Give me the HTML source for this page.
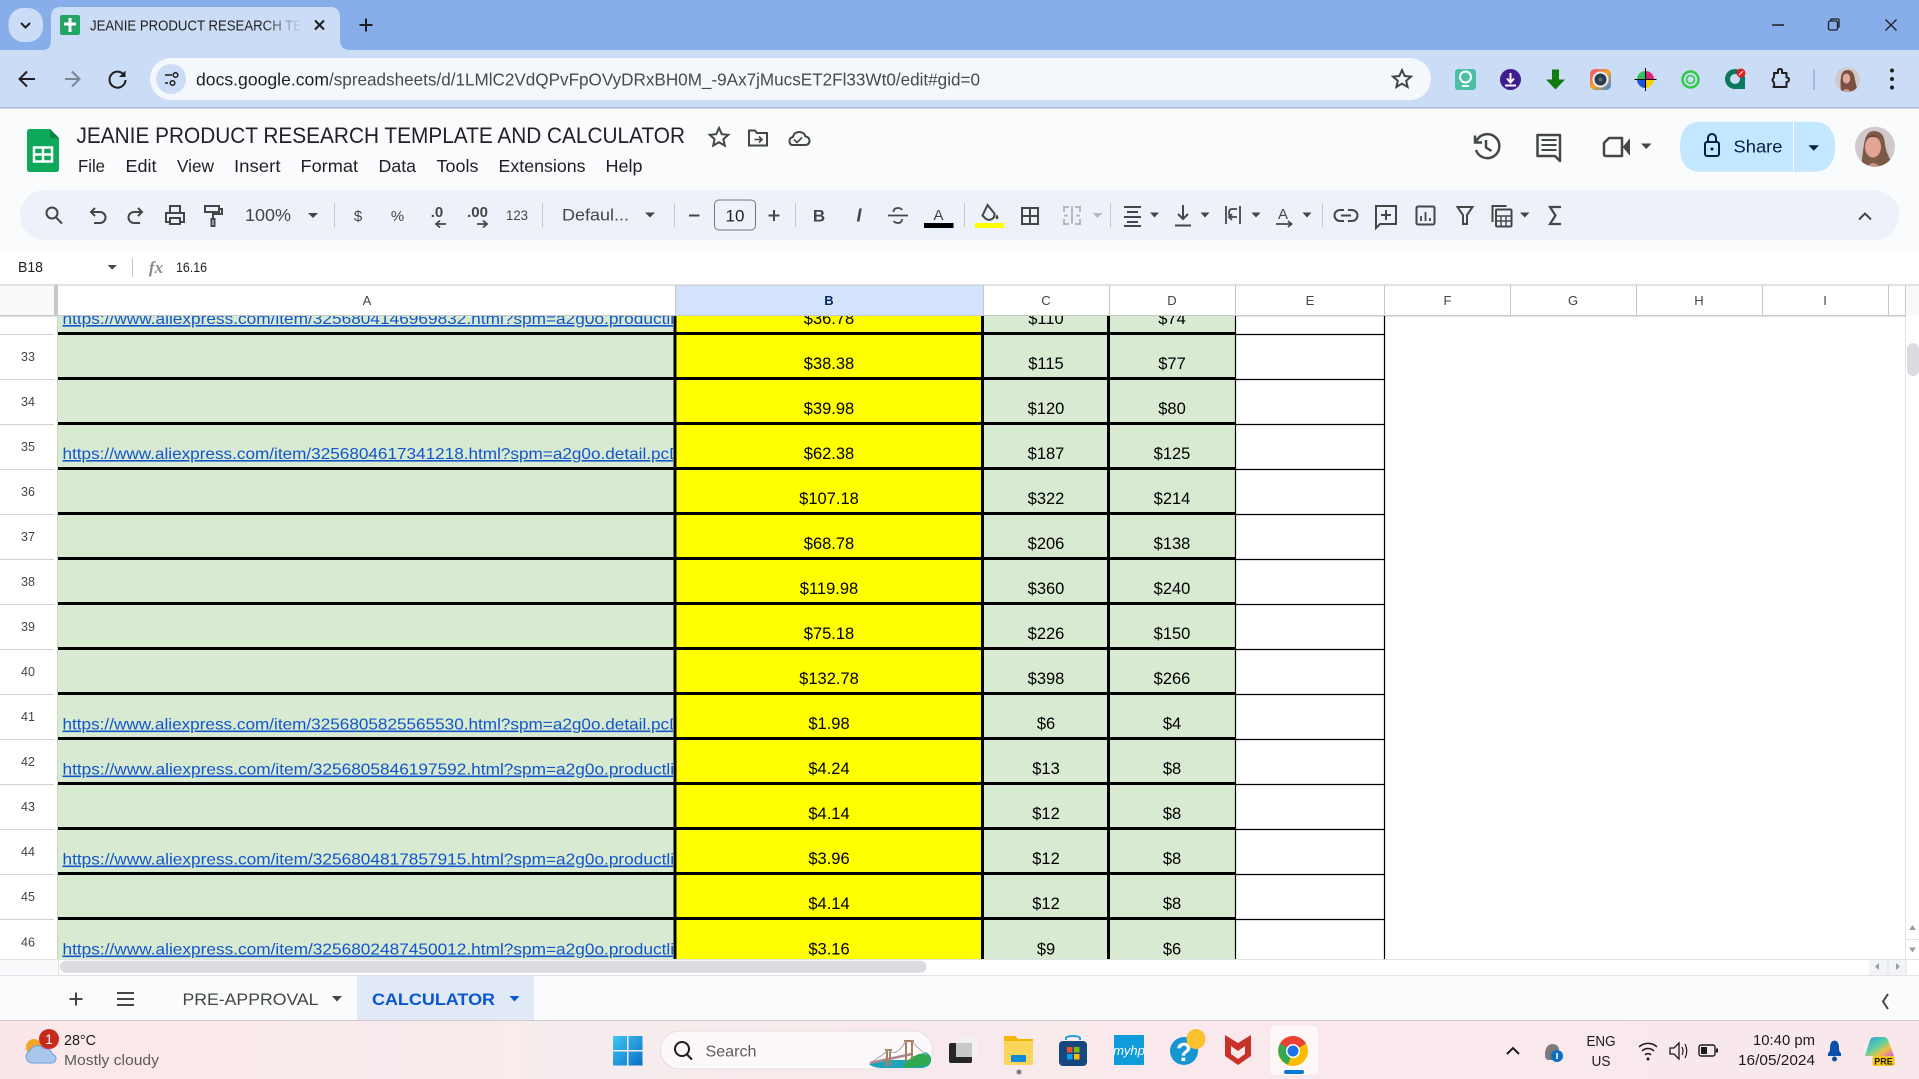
<!DOCTYPE html>
<html lang="en"><head><meta charset="utf-8"><title>JEANIE PRODUCT RESEARCH TEMPLATE AND CALCULATOR</title>
<style>
html,body{margin:0;padding:0;width:1919px;height:1079px;overflow:hidden;background:#fff}
svg{display:block;font-family:"Liberation Sans",sans-serif}
.v{font-size:16.5px;fill:#000;text-anchor:middle}
.r{font-size:12.5px;fill:#444;text-anchor:middle}
.c{font-size:13px;fill:#444;text-anchor:middle}
.l{font-size:16px;fill:#1155cc;text-decoration:underline}
.m{font-size:17.5px;fill:#202124}
.ic{fill:none;stroke:#444746;stroke-width:2}
.t{font-size:15px;fill:#444746;text-anchor:middle}
.cr{fill:#444746}
</style></head><body>
<svg width="1919" height="1079" viewBox="0 0 1919 1079" xmlns="http://www.w3.org/2000/svg">
<defs>
<clipPath id="g"><rect x="0" y="316" width="1906" height="643"/></clipPath>
<clipPath id="ac"><rect x="58" y="316" width="615" height="643"/></clipPath>
<clipPath id="a1"><circle cx="1847.500" cy="79.500" r="12.500"/></clipPath>
<clipPath id="a2"><circle cx="1875" cy="146.700" r="20"/></clipPath>
<linearGradient id="fade" x1="0" x2="1"><stop offset="0" stop-color="#cbdcf6" stop-opacity="0"/><stop offset="1" stop-color="#cbdcf6"/></linearGradient>
<linearGradient id="tb" x1="0" x2="1"><stop offset="0" stop-color="#fbe7e9"/><stop offset=".3" stop-color="#f7eced"/><stop offset=".6" stop-color="#f9e9ec"/><stop offset="1" stop-color="#f9e8eb"/></linearGradient>
<linearGradient id="wn" x1="0" y1="0" x2="1" y2="1"><stop offset="0" stop-color="#3ec6f5"/><stop offset="1" stop-color="#0a6fc4"/></linearGradient>
<linearGradient id="cam" x1="0" y1="0" x2="1" y2="1"><stop offset="0" stop-color="#f5487f"/><stop offset=".5" stop-color="#f5a623"/><stop offset="1" stop-color="#2f80ed"/></linearGradient>
<linearGradient id="cop" x1="0" y1="0" x2="1" y2="1"><stop offset="0" stop-color="#1f9fe8"/><stop offset=".45" stop-color="#5fd0a0"/><stop offset=".7" stop-color="#f0c040"/><stop offset="1" stop-color="#d25bd8"/></linearGradient>
</defs>

<!-- browser chrome -->
<rect width="1919" height="50" fill="#87aeeb"/>
<rect y="50" width="1919" height="58" fill="#cbdcf6"/>
<rect y="107" width="1919" height="1.500" fill="#a5b6d2"/>
<rect x="8.500" y="8" width="34.500" height="34" rx="15" fill="#cbdcf6"/>
<path d="M21 23l4.500 4.500 4.500-4.500" fill="none" stroke="#1f1f1f" stroke-width="2"/>
<path d="M43 50q8 0 8-10V17q0-10 10-10h269q10 0 10 10v23q0 10 10 10z" fill="#cbdcf6"/>
<rect x="60" y="15" width="20" height="20" rx="2" fill="#23a566"/>
<path d="M70 18v14M64 24h12" stroke="#fff" stroke-width="3"/>
<text x="90" y="30.500" font-size="15" fill="#1f1f1f" textLength="212" lengthAdjust="spacingAndGlyphs">JEANIE PRODUCT RESEARCH TE</text>
<rect x="262" y="12" width="40" height="26" fill="url(#fade)"/>
<path d="M315 20.500l9 9M324 20.500l-9 9" stroke="#1f1f1f" stroke-width="2"/>
<path d="M366 18.500v13M359.500 25h13" stroke="#1f1f1f" stroke-width="2"/>
<path d="M1772 25h12" stroke="#1f1f1f" stroke-width="1.500"/>
<rect x="1828.500" y="21" width="9" height="9" rx="1.500" fill="none" stroke="#1f1f1f" stroke-width="1.300"/><path d="M1831 21v-2h7q1 0 1 1v7h-1.500" fill="none" stroke="#1f1f1f" stroke-width="1.300"/>
<path d="M1885.500 19.500l11 11M1896.500 19.500l-11 11" stroke="#1f1f1f" stroke-width="1.300"/>

<path d="M35 79H20M27 71.500L19.500 79l7.500 7.500" fill="none" stroke="#1f1f1f" stroke-width="2"/>
<path d="M65 79h14M72 71.500l7.500 7.500-7.500 7.500" fill="none" stroke="#7a8595" stroke-width="2"/>
<path d="M124 75a8 8 0 1 0 1.500 5" fill="none" stroke="#1f1f1f" stroke-width="2"/><path d="M125.500 70.500v6.500h-6.500z" fill="#1f1f1f"/>
<rect x="150" y="58" width="1281" height="42" rx="21" fill="#f4f8fd"/>
<circle cx="171" cy="79" r="15" fill="#cbdcf6"/>
<path d="M165 75h7M165 83h3" stroke="#1f1f1f" stroke-width="1.600"/><circle cx="175.500" cy="75" r="2.300" fill="none" stroke="#1f1f1f" stroke-width="1.500"/><circle cx="172.500" cy="83" r="2.300" fill="none" stroke="#1f1f1f" stroke-width="1.500"/>
<text x="196" y="85.500" font-size="17.500" fill="#1f1f1f" textLength="133" lengthAdjust="spacingAndGlyphs">docs.google.com</text>
<text x="329" y="85.500" font-size="17.500" fill="#474b50" textLength="651" lengthAdjust="spacingAndGlyphs">/spreadsheets/d/1LMlC2VdQPvFpOVyDRxBH0M_-9Ax7jMucsET2Fl33Wt0/edit#gid=0</text>
<path d="M1402 70l2.700 6 6.300.6-4.800 4.200 1.400 6.200-5.600-3.300-5.600 3.300 1.400-6.200-4.800-4.200 6.300-.6z" fill="none" stroke="#444" stroke-width="2"/>

<!-- extensions -->
<rect x="1455" y="69" width="21" height="21" rx="3" fill="#4dbfa4"/><circle cx="1465.500" cy="77" r="5.500" fill="none" stroke="#fff" stroke-width="2"/><path d="M1462 86h7" stroke="#fff" stroke-width="2"/>
<circle cx="1510.500" cy="79.500" r="10.500" fill="#3f1d91"/><path d="M1510.500 73v8M1507 78.500l3.500 4 3.500-4M1505 85.500h11" stroke="#fff" stroke-width="2" fill="none"/>
<path d="M1552 69.500h7v10h6l-9.500 10-9.500-10h6z" fill="#107c10"/>
<rect x="1590" y="69" width="21" height="21" rx="5" fill="url(#cam)"/><circle cx="1600.500" cy="79.500" r="8" fill="#e8eef5"/><circle cx="1600.500" cy="79.500" r="6" fill="#2d3a4a"/><circle cx="1600.500" cy="79.500" r="2" fill="#5a6b7e"/>
<circle cx="1645.500" cy="79.500" r="8.500" fill="#f5d000"/><path d="M1645.500 79.500V71a8.500 8.500 0 0 1 8.500 8.500z" fill="#e0217b"/><path d="M1645.500 79.500H1637a8.500 8.500 0 0 1 8.500-8.500z" fill="#30c060"/><path d="M1645.500 79.500V88a8.500 8.500 0 0 1-8.500-8.500z" fill="#2050e0"/><path d="M1645.500 68v23M1634.500 79.500h22" stroke="#000" stroke-width="1"/>
<circle cx="1690.500" cy="79.500" r="8" fill="none" stroke="#2ecc40" stroke-width="2.500"/><circle cx="1690.500" cy="79.500" r="4" fill="none" stroke="#2ecc40" stroke-width="1.600"/>
<path d="M1735 69a10 10 0 1 0 0 20h10v-8a10 10 0 0 0-10-12z" fill="#0a7a5e"/><circle cx="1735" cy="79" r="5" fill="#cbdcf6"/><circle cx="1741" cy="73" r="4.500" fill="#e02020"/><path d="M1739 75l4-4" stroke="#fff" stroke-width="1"/>
<path d="M1774 73h4v-2.500q0-1.500 2-1.500t2 1.500V73h4.500v4.500q2.500 0 2.500 2.200t-2.500 2.300V87h-13q1.500-3 0-5-2-2 0-4 1-2 .5-5z" fill="none" stroke="#1f1f1f" stroke-width="2" stroke-linejoin="round"/>
<path d="M1814 69v21" stroke="#8fb0e0" stroke-width="1.500"/>
<g clip-path="url(#a1)"><rect x="1835" y="67" width="25" height="25" fill="#cfc9cc"/><path d="M1841 92q-1-10 0-15 1-7 6.500-7t7 7q1 6 3.500 15z" fill="#7a5040"/><ellipse cx="1846.500" cy="78.500" rx="3.800" ry="5" fill="#e2a89a"/><path d="M1842 92q4-6 9 0z" fill="#d49f90"/></g>
<circle cx="1892" cy="70.500" r="2" fill="#1f1f1f"/><circle cx="1892" cy="79" r="2" fill="#1f1f1f"/><circle cx="1892" cy="87.500" r="2" fill="#1f1f1f"/>

<!-- sheets header -->
<rect y="108.500" width="1919" height="141.500" fill="#f9fbfd"/>
<path d="M30 129h20l9 9v31q0 3-3 3H30q-3 0-3-3v-37q0-3 3-3z" fill="#0da85a"/>
<path d="M50 129l9 9h-9z" fill="#0c8046"/>
<path d="M34 147.500h18v14H34zM34 154.500h18M43 147.500v14" fill="none" stroke="#fff" stroke-width="2.500"/>
<text x="76.500" y="143" font-size="22" fill="#202124" textLength="608.500" lengthAdjust="spacingAndGlyphs">JEANIE PRODUCT RESEARCH TEMPLATE AND CALCULATOR</text>
<path d="M719 128l2.800 6.200 6.500.6-4.900 4.400 1.400 6.400-5.800-3.400-5.800 3.400 1.400-6.400-4.900-4.400 6.500-.6z" fill="none" stroke="#444746" stroke-width="2"/>
<path d="M749 130.500h6l2 2.500h10v12.500h-18z" fill="none" stroke="#444746" stroke-width="2"/><path d="M754.500 139.500h7M759 136.500l3 3-3 3" fill="none" stroke="#444746" stroke-width="1.600"/>
<path d="M793 145h12q4.500 0 4.500-4.200 0-3.800-4-4.300-1.500-4.500-6-4.500-5.500 0-6.500 5-3.500.6-3.500 4 0 4 3.500 4z" fill="none" stroke="#444746" stroke-width="2"/><path d="M794 139.500l3 3 5-5" fill="none" stroke="#444746" stroke-width="1.600"/>
<g class="m">
<text x="78" y="172" textLength="27" lengthAdjust="spacingAndGlyphs">File</text>
<text x="125.500" y="172" textLength="31" lengthAdjust="spacingAndGlyphs">Edit</text>
<text x="177" y="172" textLength="37" lengthAdjust="spacingAndGlyphs">View</text>
<text x="234" y="172" textLength="46.500" lengthAdjust="spacingAndGlyphs">Insert</text>
<text x="300.500" y="172" textLength="57.500" lengthAdjust="spacingAndGlyphs">Format</text>
<text x="378.500" y="172" textLength="37.500" lengthAdjust="spacingAndGlyphs">Data</text>
<text x="436.500" y="172" textLength="42" lengthAdjust="spacingAndGlyphs">Tools</text>
<text x="498.500" y="172" textLength="87" lengthAdjust="spacingAndGlyphs">Extensions</text>
<text x="605.500" y="172" textLength="37" lengthAdjust="spacingAndGlyphs">Help</text>
</g>

<!-- right header -->
<path d="M1475 135.500v7h7" fill="none" stroke="#444746" stroke-width="2.500"/><path d="M1476.500 141a12 12 0 1 1-.5 9" fill="none" stroke="#444746" stroke-width="2.500"/><path d="M1486 140v7.500l5.500 3.500" fill="none" stroke="#444746" stroke-width="2.500"/>
<path d="M1537.500 135h22.500v26l-5-5h-17.500z" fill="none" stroke="#444746" stroke-width="2.500" stroke-linejoin="round"/><path d="M1541.500 140h15M1541.500 145h15M1541.500 150h15" stroke="#444746" stroke-width="2"/>
<path d="M1609 138h13v18h-16q-2 0-2-2v-11z" fill="none" stroke="#444746" stroke-width="2.500" stroke-linejoin="round"/><path d="M1624 147l5-6v12z" fill="#444746" stroke="#444746" stroke-width="2"/>
<path d="M1641 143.500h10.500l-5.250 5.500z" fill="#444746"/>
<path d="M1701 121.700h112q22 0 22 25t-22 25H1701q-21 0-21-25t21-25z" fill="#c2e7ff"/>
<path d="M1793.500 121.700v50" stroke="#f9fbfd" stroke-width="1"/>
<rect x="1705" y="142" width="14" height="14" rx="2" fill="none" stroke="#041e49" stroke-width="2"/><path d="M1708 142v-4a4 4 0 0 1 8 0v4" fill="none" stroke="#041e49" stroke-width="2"/><circle cx="1712" cy="149" r="1.500" fill="#041e49"/>
<text x="1733.500" y="152.500" font-size="17.500" fill="#041e49" textLength="49" lengthAdjust="spacingAndGlyphs">Share</text>
<path d="M1808.500 145.200h10.500l-5.250 5.500z" fill="#041e49"/>
<g clip-path="url(#a2)"><rect x="1855" y="126" width="40" height="42" fill="#cfc9cc"/><path d="M1861 168q2-18 3-24 2-13 10-13 10 0 11 13 1 10 10 24z" fill="#7d5a48"/><ellipse cx="1873" cy="147" rx="8" ry="10.500" fill="#e2a594"/><path d="M1866 138q7 -6 14 0-7-2-14 0z" fill="#6a4636"/><path d="M1866 168q7-10 15 0z" fill="#c78f80"/></g>

<!-- toolbar -->
<rect x="20" y="190" width="1879" height="50" rx="25" fill="#edf2fa"/>
<g class="ic">
<circle cx="52" cy="213" r="5.500"/><path d="M56 217.500l6 6"/>
<path d="M92 212h8a5 5 0 0 1 0 11h-6M95 208l-4 4 4 4" transform="translate(0,0)"/>
<path d="M142 212h-8a5 5 0 0 0 0 11h6M138 208l4 4-4 4"/>
<path d="M170 213v-7h10v7M170 222h-4v-9h18v9h-4M170 218h10v6h-10z"/>
<path d="M205 206h14v6h-14zM219 209h3v5h-9v5M211.500 219h3v7h-3z"/>
</g>
<text x="245" y="221" font-size="17.500" fill="#444746" textLength="46" lengthAdjust="spacingAndGlyphs">100%</text>
<path class="cr" d="M308 213h10l-5 5z"/>
<path d="M334.500 203v24M542.500 203v24M674.500 203v24M795.500 203v24M964.500 203v24M1110.500 203v24M1322.500 203v24" stroke="#c7c7c7" stroke-width="1"/>
<text x="358" y="221" class="t">$</text><text x="397.500" y="221" class="t">%</text>
<text x="437" y="217" font-size="15" font-weight="bold" fill="#444746" text-anchor="middle">.0</text>
<path d="M446 224h-10M440 220.500l-4 3.500 4 3.500" fill="none" stroke="#444746" stroke-width="1.800"/>
<text x="477.500" y="217" font-size="15" font-weight="bold" fill="#444746" text-anchor="middle">.00</text>
<path d="M477 224h10M483 220.500l4 3.500-4 3.500" fill="none" stroke="#444746" stroke-width="1.800"/>
<text x="517" y="220" font-size="14" fill="#444746" text-anchor="middle" textLength="22" lengthAdjust="spacingAndGlyphs">123</text>
<text x="562" y="220.500" font-size="17" fill="#444746" textLength="67" lengthAdjust="spacingAndGlyphs">Defaul...</text>
<path class="cr" d="M645 212.500h10l-5 5z"/>
<path d="M689 215.500h10.500" stroke="#444746" stroke-width="2"/>
<rect x="714.500" y="200" width="41" height="30" rx="4.500" fill="none" stroke="#747775" stroke-width="1"/>
<text x="735" y="221.500" font-size="17" fill="#1f1f1f" text-anchor="middle">10</text>
<path d="M768.500 215.500h11M774 210v11" stroke="#444746" stroke-width="2"/>
<text x="819" y="221.500" font-size="17" font-weight="bold" fill="#444746" text-anchor="middle">B</text>
<text x="859" y="221.500" font-size="18" font-style="italic" font-weight="bold" fill="#444746" text-anchor="middle">I</text>
<path d="M888 215.500h20M893.500 212q0-4 4.500-4 3 0 4 2M902 219q0 4-4 4-3 0-4.500-2" fill="none" stroke="#444746" stroke-width="1.800"/>
<text x="938.500" y="220" font-size="15" fill="#444746" text-anchor="middle">A</text>
<rect x="924" y="223" width="29.500" height="5" fill="#000"/>
<path d="M987.500 205l7 8.500a5.500 5.500 0 0 1-9 5l-3-3z" fill="none" stroke="#444746" stroke-width="2"/><path d="M997 214.500q3 3.500 0 5-3-1.500 0-5z" fill="#444746"/>
<rect x="975" y="223" width="29" height="5" fill="#ffff00"/>
<path d="M1022 208h16v16h-16zM1030 208v16M1022 216h16" fill="none" stroke="#444746" stroke-width="2"/>
<path d="M1064 212v-5h5M1080 212v-5h-5M1064 219v5h5M1080 219v5h-5M1072 206v18M1068 215.500h-4M1080 215.500h-4" fill="none" stroke="#b7b9bb" stroke-width="2"/>
<path d="M1092.500 213h10l-5 5z" fill="#b7b9bb"/>
<path d="M1124 207h17M1127 212h11M1124 217h17M1127 222h11M1124 226h17" stroke="#444746" stroke-width="2"/>
<path class="cr" d="M1150 212.500h9l-4.500 5z"/>
<path d="M1183 205v14M1178 214l5 5 5-5M1175 225.500h16" fill="none" stroke="#444746" stroke-width="2"/>
<path class="cr" d="M1200.500 212.500h9l-4.500 5z"/>
<path d="M1226 206v18M1240 206v18M1237 209h-5q-3 0-3 4t3 4h5M1232 214l-3 3 3 3" fill="none" stroke="#444746" stroke-width="1.800"/>
<path class="cr" d="M1251.500 212.500h9l-4.500 5z"/>
<text x="1283" y="219" font-size="15" fill="#444746" text-anchor="middle">A</text>
<path d="M1276 224h15M1288 221l3.500 3-3.500 3" fill="none" stroke="#444746" stroke-width="1.800"/>
<path class="cr" d="M1302.500 212.500h9l-4.500 5z"/>
<path d="M1344 210h-4a5.500 5.500 0 0 0 0 11h4M1348 210h4a5.500 5.500 0 0 1 0 11h-4M1341 215.500h10" fill="none" stroke="#444746" stroke-width="2"/>
<path d="M1376 206h20v18h-16l-4 4z" fill="none" stroke="#444746" stroke-width="2"/><path d="M1386 210v10M1381 215h10" stroke="#444746" stroke-width="2"/>
<rect x="1416.500" y="206.500" width="18" height="18" rx="1.500" fill="none" stroke="#444746" stroke-width="2"/><path d="M1421 221v-5M1425.500 221v-9M1430 221v-3" stroke="#444746" stroke-width="1.800"/>
<path d="M1457.500 207h15l-5.500 8v9h-4v-9z" fill="none" stroke="#444746" stroke-width="2"/>
<path d="M1492.500 222v-16h14" fill="none" stroke="#444746" stroke-width="2"/><rect x="1496" y="209.500" width="15.500" height="17" rx="1" fill="none" stroke="#444746" stroke-width="2"/><path d="M1496 216h15M1496 221h15M1501 216v10M1506 216v10" stroke="#444746" stroke-width="1.400"/>
<path class="cr" d="M1520 212.500h9.500l-4.750 5z"/>
<path d="M1561 207h-11l5.500 8.500-5.500 8.500h11" fill="none" stroke="#444746" stroke-width="2.200"/>
<path d="M1859 219.500l6-6 6 6" fill="none" stroke="#444746" stroke-width="2"/>

<!-- formula bar -->
<rect y="250" width="1919" height="35" fill="#fff"/>
<text x="18" y="272" font-size="14.500" fill="#1f1f1f" textLength="25" lengthAdjust="spacingAndGlyphs">B18</text>
<path class="cr" d="M107.500 265h9.500l-4.750 4.500z"/>
<path d="M132.500 258v19" stroke="#c7c7c7"/>
<text x="156" y="273" font-size="17" font-style="italic" font-family="Liberation Serif" font-weight="bold" fill="#8a8c8e" text-anchor="middle">fx</text>
<text x="176" y="272" font-size="14" fill="#1f1f1f" textLength="31" lengthAdjust="spacingAndGlyphs">16.16</text>
<rect y="284.500" width="1919" height="1" fill="#c7c7c7"/>

<!-- column headers -->
<rect x="0" y="285.500" width="54" height="30" fill="#f8f9fa"/>
<rect x="54" y="285.500" width="4" height="30" fill="#c7c7c7"/>
<rect x="675" y="285.500" width="308" height="30" fill="#d3e3fd"/>
<rect x="1906" y="285.500" width="13" height="30" fill="#f8f9fa"/>
<path d="M675.500 285v30M983.500 285v30M1109.500 285v30M1235.500 285v30M1384.500 285v30M1510.500 285v30M1636.500 285v30M1762.500 285v30M1888.500 285v30M1905.500 285v30" stroke="#c7c7c7" fill="none"/>
<path d="M1905.500 316v643" stroke="#e1e3e6"/>
<text class="c" x="367" y="305">A</text>
<text class="c" x="829" y="305" style="fill:#0a2a5e;font-weight:bold">B</text>
<text class="c" x="1046" y="305">C</text><text class="c" x="1172" y="305">D</text><text class="c" x="1310" y="305">E</text><text class="c" x="1447.500" y="305">F</text><text class="c" x="1573" y="305">G</text><text class="c" x="1699" y="305">H</text><text class="c" x="1825" y="305">I</text>
<rect y="315" width="1906" height="1.500" fill="#c7c7c7"/>

<!-- grid -->
<g clip-path="url(#g)">
<rect x="58" y="316" width="617" height="643" fill="#d9ead3"/>
<rect x="675" y="316" width="308" height="643" fill="#ffff00"/>
<rect x="983" y="316" width="252" height="643" fill="#d9ead3"/>
<path d="M0 334.500h54M0 379.500h54M0 424.500h54M0 469.500h54M0 514.500h54M0 559.500h54M0 604.500h54M0 649.500h54M0 694.500h54M0 739.500h54M0 784.500h54M0 829.500h54M0 874.500h54M0 919.500h54" stroke="#d0d0d0"/>
<path d="M1235 334.500h150M1235 379.500h150M1235 424.500h150M1235 469.500h150M1235 514.500h150M1235 559.500h150M1235 604.500h150M1235 649.500h150M1235 694.500h150M1235 739.500h150M1235 784.500h150M1235 829.500h150M1235 874.500h150M1235 919.500h150" stroke="#000" stroke-width="1.200"/>
<path d="M58 333.500h1177M58 378.500h1177M58 423.500h1177M58 468.500h1177M58 513.500h1177M58 558.500h1177M58 603.500h1177M58 648.500h1177M58 693.500h1177M58 738.500h1177M58 783.500h1177M58 828.500h1177M58 873.500h1177M58 918.500h1177" stroke="#000" stroke-width="3"/>
<path d="M675 316v643M982.500 316v643M1108.500 316v643" stroke="#000" stroke-width="3"/>
<path d="M1235.500 316v643M1384.500 316v643" stroke="#000" stroke-width="1.200"/>

<g clip-path="url(#ac)">
<text class="l" x="62.500" y="324" textLength="625" lengthAdjust="spacingAndGlyphs">https://www.aliexpress.com/item/3256804146969832.html?spm=a2g0o.productlist</text>
<text class="l" x="62.500" y="459" textLength="619" lengthAdjust="spacingAndGlyphs">https://www.aliexpress.com/item/3256804617341218.html?spm=a2g0o.detail.pcD</text>
<text class="l" x="62.500" y="729.500" textLength="619" lengthAdjust="spacingAndGlyphs">https://www.aliexpress.com/item/3256805825565530.html?spm=a2g0o.detail.pcD</text>
<text class="l" x="62.500" y="774.500" textLength="625" lengthAdjust="spacingAndGlyphs">https://www.aliexpress.com/item/3256805846197592.html?spm=a2g0o.productlist</text>
<text class="l" x="62.500" y="864.500" textLength="625" lengthAdjust="spacingAndGlyphs">https://www.aliexpress.com/item/3256804817857915.html?spm=a2g0o.productlist</text>
<text class="l" x="62.500" y="954.500" textLength="625" lengthAdjust="spacingAndGlyphs">https://www.aliexpress.com/item/3256802487450012.html?spm=a2g0o.productlist</text>
</g>

<text class="v" x="829" y="324">$36.78</text><text class="v" x="1046" y="324">$110</text><text class="v" x="1172" y="324">$74</text>
<text class="r" x="28" y="361">33</text><text class="v" x="829" y="369">$38.38</text><text class="v" x="1046" y="369">$115</text><text class="v" x="1172" y="369">$77</text>
<text class="r" x="28" y="406">34</text><text class="v" x="829" y="414">$39.98</text><text class="v" x="1046" y="414">$120</text><text class="v" x="1172" y="414">$80</text>
<text class="r" x="28" y="451">35</text><text class="v" x="829" y="459">$62.38</text><text class="v" x="1046" y="459">$187</text><text class="v" x="1172" y="459">$125</text>
<text class="r" x="28" y="496">36</text><text class="v" x="829" y="504">$107.18</text><text class="v" x="1046" y="504">$322</text><text class="v" x="1172" y="504">$214</text>
<text class="r" x="28" y="541">37</text><text class="v" x="829" y="549">$68.78</text><text class="v" x="1046" y="549">$206</text><text class="v" x="1172" y="549">$138</text>
<text class="r" x="28" y="586">38</text><text class="v" x="829" y="594">$119.98</text><text class="v" x="1046" y="594">$360</text><text class="v" x="1172" y="594">$240</text>
<text class="r" x="28" y="631">39</text><text class="v" x="829" y="639">$75.18</text><text class="v" x="1046" y="639">$226</text><text class="v" x="1172" y="639">$150</text>
<text class="r" x="28" y="676">40</text><text class="v" x="829" y="684">$132.78</text><text class="v" x="1046" y="684">$398</text><text class="v" x="1172" y="684">$266</text>
<text class="r" x="28" y="721">41</text><text class="v" x="829" y="729">$1.98</text><text class="v" x="1046" y="729">$6</text><text class="v" x="1172" y="729">$4</text>
<text class="r" x="28" y="766">42</text><text class="v" x="829" y="774">$4.24</text><text class="v" x="1046" y="774">$13</text><text class="v" x="1172" y="774">$8</text>
<text class="r" x="28" y="811">43</text><text class="v" x="829" y="819">$4.14</text><text class="v" x="1046" y="819">$12</text><text class="v" x="1172" y="819">$8</text>
<text class="r" x="28" y="856">44</text><text class="v" x="829" y="864">$3.96</text><text class="v" x="1046" y="864">$12</text><text class="v" x="1172" y="864">$8</text>
<text class="r" x="28" y="901">45</text><text class="v" x="829" y="909">$4.14</text><text class="v" x="1046" y="909">$12</text><text class="v" x="1172" y="909">$8</text>
<text class="r" x="28" y="946.500">46</text><text class="v" x="829" y="954.500">$3.16</text><text class="v" x="1046" y="954.500">$9</text><text class="v" x="1172" y="954.500">$6</text>
</g>
<path d="M57.500 316v643" stroke="#c7d6c2"/>

<!-- scrollbars -->
<rect x="1907" y="343" width="12" height="33" rx="6" fill="#dadce0"/>
<path d="M1906 939.500h13" stroke="#e1e3e6"/>
<path d="M1912.500 925l-3.500 5h7zM1912.500 952.500l-3.500-5h7z" fill="#9aa0a6"/>
<rect y="959" width="1919" height="16" fill="#fff"/>
<rect y="959" width="1919" height="1" fill="#dfe1e3"/>
<rect x="0" y="960" width="58" height="15" fill="#f8f9fa"/><path d="M58.500 960v15" stroke="#e0e0e0"/>
<rect x="60" y="960.700" width="866.500" height="12" rx="6" fill="#dadce0"/>
<rect x="1869" y="960" width="37" height="15" fill="#f3f4f5"/>
<path d="M1888 960v15M1906 960v15" stroke="#e1e3e6"/>
<path d="M1875 966.500l4-3.500v7zM1900 966.500l-4-3.500v7z" fill="#9aa0a6"/>

<!-- sheet tabs -->
<rect y="975" width="1919" height="45" fill="#f9fbfd"/>
<rect y="975" width="1919" height="1" fill="#e1e3e6"/>
<path d="M76 992.500v13M69.500 999h13" stroke="#444746" stroke-width="2"/>
<path d="M117 993h17M117 999h17M117 1005h17" stroke="#444746" stroke-width="2"/>
<text x="182.500" y="1005" font-size="17" font-weight="500" fill="#444746" textLength="136" lengthAdjust="spacingAndGlyphs">PRE-APPROVAL</text>
<path class="cr" d="M332 996h10l-5 5.500z"/>
<rect x="357" y="976" width="177" height="44" fill="#e1e9f7"/>
<text x="372" y="1005" font-size="17" font-weight="bold" fill="#0b57d0" textLength="123" lengthAdjust="spacingAndGlyphs">CALCULATOR</text>
<path d="M509.500 996h10l-5 5.500z" fill="#0b57d0"/>
<path d="M1888 994l-5 7.500 5 7.500" fill="none" stroke="#444746" stroke-width="2"/>

<!-- taskbar -->
<rect y="1020" width="1919" height="59" fill="url(#tb)"/>
<rect y="1020" width="1919" height="1" fill="#cfc9cb"/>
<circle cx="34" cy="1047" r="8" fill="#f5a623"/>
<path d="M32 1063a6.500 6.500 0 0 1-2-12.500 8 8 0 0 1 14-1.500 6 6 0 0 1 8 5 4.500 4.500 0 0 1-1 9z" fill="#a9c6ec" stroke="#6f9fd8"/>
<circle cx="49" cy="1039" r="10" fill="#c42b1c"/><text x="49" y="1044" font-size="13.500" fill="#fff" text-anchor="middle">1</text>
<text x="64" y="1045" font-size="15" fill="#1b1b1b" textLength="32" lengthAdjust="spacingAndGlyphs">28°C</text>
<text x="64" y="1065" font-size="15" fill="#5a5a5a" textLength="95" lengthAdjust="spacingAndGlyphs">Mostly cloudy</text>
<path d="M613 1036h14v14h-14zM628.500 1036h14v14h-14zM613 1051.500h14v14h-14zM628.500 1051.500h14v14h-14z" fill="url(#wn)"/>
<rect x="660.500" y="1031" width="272" height="38" rx="19" fill="#fdf9fa" stroke="#e3dfe0"/>
<circle cx="682" cy="1049" r="7" fill="none" stroke="#1b1b1b" stroke-width="2"/><path d="M687 1054.500l5 5" stroke="#1b1b1b" stroke-width="2"/>
<text x="705.500" y="1056.500" font-size="16" fill="#5c5c5c" textLength="51" lengthAdjust="spacingAndGlyphs">Search</text>
<!-- bridge -->
<path d="M869 1064q8-4 20-4h26l10-8q6 2 6 8 0 6-8 8h-40q-10 0-14-4z" fill="#1fa3b8"/>
<path d="M903 1068q4-10 16-14 8-2 12 4 0 6-6 8z" fill="#2fa850"/>
<path d="M870 1063l42-9" stroke="#a88a90" stroke-width="2.500"/>
<path d="M887 1050v16M890 1050v16M906 1041v20M912 1041v18" stroke="#a97f62" stroke-width="2"/><path d="M885 1050h7M904 1041h10" stroke="#a97f62" stroke-width="2"/>
<path d="M888 1050q8 8 18-9M912 1041q6 8 15 14M888 1050q-6 6-15 11" fill="none" stroke="#9fa8b8" stroke-width="1"/>
<!-- task view -->
<rect x="949" y="1043" width="23" height="20" rx="2" fill="#262626"/>
<rect x="956" y="1036" width="22" height="21" rx="2" fill="#f3f1f2" fill-opacity=".9"/>
<rect x="956" y="1043" width="16" height="14" fill="#c9c9c9"/>
<path d="M1004 1036h11l3 3h15v26h-29z" fill="#f2b500"/><rect x="1004" y="1041" width="29" height="24" fill="#fbd65a"/><rect x="1011" y="1055" width="15" height="7" rx="1" fill="#1089d8"/>
<circle cx="1019" cy="1072" r="2.500" fill="#7d7d7d"/>
<rect x="1059" y="1041" width="28" height="25" rx="4" fill="#17477e"/><path d="M1066 1040v-2a7 2 0 0 1 14 0v2" fill="none" stroke="#27a0e0" stroke-width="2"/>
<rect x="1067" y="1047" width="5.500" height="5.500" fill="#f25022"/><rect x="1074" y="1047" width="5.500" height="5.500" fill="#7fba00"/><rect x="1067" y="1054" width="5.500" height="5.500" fill="#00a4ef"/><rect x="1074" y="1054" width="5.500" height="5.500" fill="#ffb900"/>
<rect x="1114" y="1035" width="30" height="30" fill="#0f9bdc"/><text x="1129" y="1055" font-size="13" font-style="italic" fill="#fff" text-anchor="middle">myhp</text>
<circle cx="1184" cy="1051" r="14" fill="#1795d3"/><text x="1184" y="1061" font-size="26" font-weight="bold" fill="#fff" text-anchor="middle">?</text>
<ellipse cx="1196" cy="1039" rx="9.500" ry="10" fill="#fbc02d"/>
<path d="M1225 1035l13 8 13-8v21l-13 9-13-9z" fill="#c8302a"/><path d="M1231 1046l7 5 7-5v8l-7 5-7-5z" fill="#f7e8e9"/>
<rect x="1270" y="1026" width="48" height="49" rx="4" fill="#fdf7f8"/>
<circle cx="1293" cy="1051" r="15" fill="#fbbc04"/><path d="M1293 1051l-13-7.500a15 15 0 0 1 26 0z" fill="#ea4335"/><path d="M1293 1051l-13-7.500a15 15 0 0 0 8 21z" fill="#34a853"/><circle cx="1293" cy="1051" r="7" fill="#fff"/><circle cx="1293" cy="1051" r="5.500" fill="#1a73e8"/>
<rect x="1284" y="1070" width="20" height="4" rx="2" fill="#0078d4"/>
<path d="M1507 1054l6-6 6 6" fill="none" stroke="#1b1b1b" stroke-width="2"/>
<path d="M1549 1060q-4 0-4-5 0-10 7-11 6 0 7 5l-2 11z" fill="#7a7a7a"/><circle cx="1557" cy="1056" r="6" fill="#0a6cc2"/><path d="M1557 1053v6" stroke="#fff" stroke-width="1.500"/>
<text x="1601" y="1046" font-size="15" fill="#1b1b1b" text-anchor="middle" textLength="29" lengthAdjust="spacingAndGlyphs">ENG</text>
<text x="1601" y="1066" font-size="15" fill="#1b1b1b" text-anchor="middle" textLength="19" lengthAdjust="spacingAndGlyphs">US</text>
<path d="M1639 1047a13 13 0 0 1 18 0M1642 1051a8.500 8.500 0 0 1 12 0M1645 1055a4 4 0 0 1 6 0" fill="none" stroke="#1b1b1b" stroke-width="1.500"/><circle cx="1648" cy="1059" r="1.500" fill="#1b1b1b"/>
<path d="M1670 1048h4l5-5v16l-5-5h-4z" fill="none" stroke="#1b1b1b" stroke-width="1.300"/><path d="M1682 1047q2 4 0 8M1685 1044q3.500 7 0 14" fill="none" stroke="#1b1b1b" stroke-width="1.200"/>
<rect x="1699" y="1045" width="16" height="11" rx="2" fill="none" stroke="#1b1b1b" stroke-width="1.400"/><rect x="1701" y="1047" width="6" height="7" fill="#1b1b1b"/><rect x="1716" y="1048.500" width="2" height="4" fill="#1b1b1b"/>
<text x="1815" y="1045" font-size="15" fill="#1b1b1b" text-anchor="end" textLength="62" lengthAdjust="spacingAndGlyphs">10:40 pm</text>
<text x="1815" y="1065" font-size="15" fill="#1b1b1b" text-anchor="end" textLength="77" lengthAdjust="spacingAndGlyphs">16/05/2024</text>
<path d="M1828 1056v-3q2-1 2-5 0-7 4.500-7.500 4.500.5 4.500 7.500 0 4 2 5v3z" fill="#0b4fa8"/><circle cx="1834.500" cy="1059" r="2.500" fill="#0b4fa8"/>
<path d="M1865 1056l5-16q1-3 5-3h8q4 0 5 3l6 16z" fill="url(#cop)"/>
<rect x="1872.500" y="1056" width="22" height="10" rx="2" fill="#f3c623"/><text x="1883.500" y="1064.500" font-size="9" font-weight="bold" fill="#1b1b1b" text-anchor="middle">PRE</text>
</svg>
</body></html>
